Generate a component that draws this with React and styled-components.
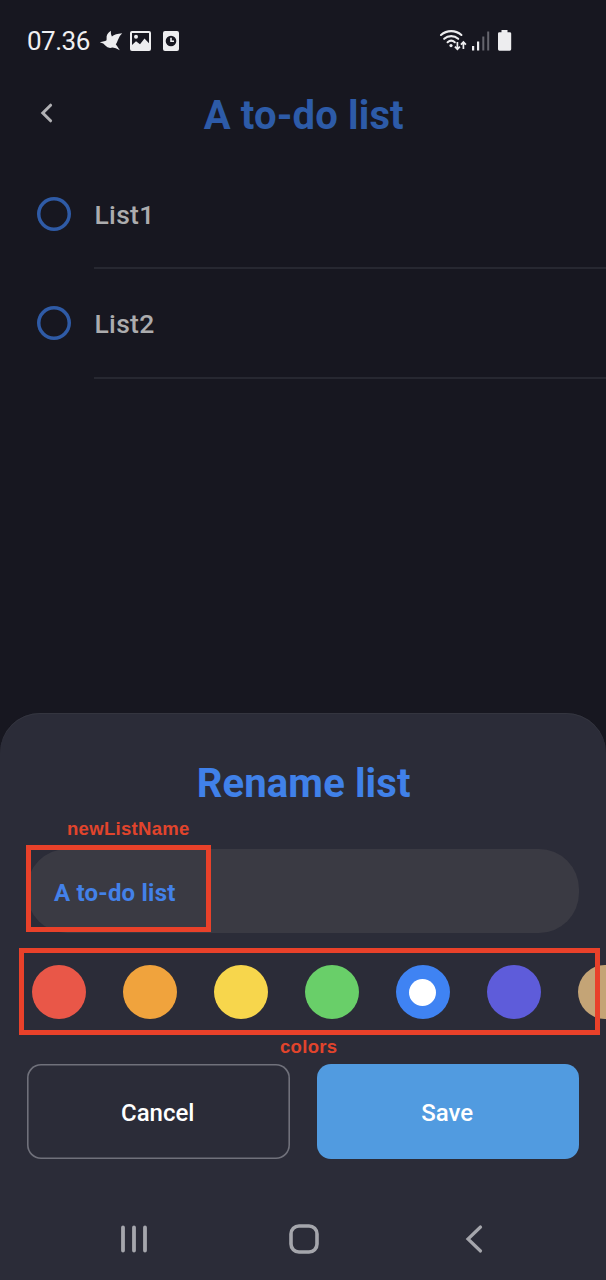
import React from "react";
import styled, { createGlobalStyle } from "styled-components";

const GlobalStyle = createGlobalStyle`
  * { box-sizing: border-box; }
  body { margin: 0; background: #171720; font-family: Roboto, sans-serif; }
`;

const Screen = styled.div`
  position: relative;
  display: flex;
  flex-direction: column;
  width: 606px;
  height: 1280px;
  overflow: hidden;
  background: #171720;
`;

const StatusBar = styled.div`
  display: flex;
  justify-content: space-between;
  align-items: center;
  height: 80px;
  padding: 2px 94px 0 27px;
`;

const StatusGroup = styled.div`
  display: flex;
  align-items: center;
`;

const Clock = styled.span`
  width: 72px;
  font-size: 26px;
  line-height: 30px;
  letter-spacing: -0.5px;
  color: #efeff1;
  white-space: nowrap;
`;

const Header = styled.header`
  display: grid;
  grid-template-columns: 94px 1fr 94px;
  align-items: center;
  height: 72px;
`;

const BackButton = styled.button`
  display: flex;
  padding: 0 0 6px 39px;
  border: 0;
  background: none;
`;

const Title = styled.h1`
  margin: 0;
  padding-left: 1.5px;
  font-size: 40px;
  line-height: 48px;
  font-weight: 700;
  letter-spacing: 0.12px;
  text-align: center;
  white-space: nowrap;
  color: ${(p) => p.$color};
`;

const TaskList = styled.ul`
  margin: 0;
  padding: 7.9px 0 0 37px;
  list-style: none;
`;

const TaskRow = styled.li`
  display: flex;
  align-items: stretch;
  height: 109.5px;
`;

const TaskCheck = styled.span`
  flex: none;
  width: 34px;
  height: 34px;
  margin: 37px 23px 0 0;
  border-radius: 50%;
  box-shadow: inset 0 0 0 3.5px #2f5ba6;
`;

const TaskLabel = styled.span`
  flex: 1;
  padding: 40px 0 0 0.5px;
  border-bottom: 2px solid #272831;
  font-size: 26.5px;
  line-height: 30px;
  font-weight: 500;
  letter-spacing: 0.3px;
  color: #acacae;
`;

const Sheet = styled.section`
  display: flex;
  flex-direction: column;
  height: 567px;
  margin-top: auto;
  padding: 47px 27px 0;
  border-radius: 40px 40px 0 0;
  background: #2b2c38;
  box-shadow: inset 0 1px 0 #34353f;
`;

const NameField = styled.div`
  display: flex;
  align-items: center;
  height: 84px;
  margin-top: 41px;
  padding: 3px 27px 0;
  border-radius: 40px;
  background: #3a3a43;
  font-size: 24px;
  font-weight: 700;
  letter-spacing: 0.2px;
  color: #4381e9;
`;

const Swatches = styled.div`
  display: flex;
  gap: 37px;
  margin: 32px -27px 0 5px;
  overflow: hidden;
`;

const Swatch = styled.span`
  display: flex;
  flex: none;
  align-items: center;
  justify-content: center;
  width: 54px;
  height: 54px;
  border-radius: 50%;
  background: ${(p) => p.$color};
`;

const SelectedDot = styled.span`
  width: 27px;
  height: 27px;
  margin-right: 1px;
  border-radius: 50%;
  background: #ffffff;
`;

const Actions = styled.div`
  display: grid;
  grid-template-columns: 1fr 1fr;
  gap: 27px;
  margin-top: 45px;
`;

const ActionButton = styled.button`
  height: 95px;
  padding: 2px 1px 0 0;
  border: 0;
  border-radius: 14px;
  background: ${(p) => (p.$primary ? "#519be0" : "transparent")};
  box-shadow: ${(p) => (p.$primary ? "none" : "inset 0 0 0 1.6px #70717b")};
  font-family: inherit;
  font-size: 24px;
  font-weight: 500;
  color: #ffffff;
`;

const NavBar = styled.nav`
  display: grid;
  grid-template-columns: repeat(3, 170px);
  justify-items: center;
  align-items: center;
  height: 82px;
  margin: auto 0 0 21.5px;
`;

const NoteBox = styled.div`
  position: absolute;
  left: ${(p) => p.$x}px;
  top: ${(p) => p.$y}px;
  width: ${(p) => p.$w}px;
  height: ${(p) => p.$h}px;
  border: 5px solid #e9412a;
`;

const NoteText = styled.span`
  position: absolute;
  left: ${(p) => p.$x}px;
  top: ${(p) => p.$y}px;
  font-family: "Liberation Sans", sans-serif;
  font-size: 18.5px;
  line-height: 22px;
  font-weight: 700;
  letter-spacing: 0.3px;
  color: #e1442c;
`;

const swatchColors = ["#e95748", "#f0a33d", "#f7d64c", "#69cf69", "#3f83f3", "#5e5cda", "#c4a476"];

function NotificationIcons() {
  return (
    <svg width="82" height="24" viewBox="99 29 82 24" fill="#ededef">
      <path d="M99.8 42.2L105.2 41Q107.2 40.6 106.6 38.2Q106 34 110.8 30.7Q110.6 34 111.9 36.4Q115 33.8 122.2 33.2Q119 36 117.8 40.2Q116.8 43 115.8 44.3Q117 45.8 119.8 50.3Q115.5 47.9 112.6 47.6Q107.8 48.8 105.6 45.8Q103.8 42.9 99.8 42.2Z" />
      <path fillRule="evenodd" d="M132 31H149Q151 31 151 33V49Q151 51 149 51H132Q130 51 130 49V33Q130 31 132 31ZM132 33V45L136 41.2L140 44.2L144.5 38.6L149 43.2V33Z" />
      <circle cx="136" cy="36.8" r="2" />
      <path d="M165 31H177Q179 31 179 33V49Q179 51 177 51H165Q163 51 163 49V33Q163 31 165 31Z" />
      <circle cx="171" cy="41" r="5.3" fill="#171720" />
      <path d="M171 37.8V41.3H174" fill="none" stroke="#ededef" strokeWidth="1.6" />
    </svg>
  );
}

function SignalIcons() {
  return (
    <svg width="73" height="24" viewBox="439 29 73 24" fill="#ededef">
      <g fill="none" stroke="#ededef" strokeWidth="2.1" strokeLinecap="round">
        <path d="M441 35A15.5 15.5 0 0 1 461.4 35" />
        <path d="M444.2 38.8A10.5 10.5 0 0 1 458.2 38.8" />
        <path d="M447.6 42.2A5.6 5.6 0 0 1 454.8 42.2" />
      </g>
      <circle cx="451" cy="45.6" r="1.6" />
      <path d="M457.4 42V49.2M454.9 46.7L457.4 49.3L459.9 46.7M463.4 49V42.5M460.9 44.7L463.4 42.1L465.9 44.7" fill="none" stroke="#ededef" strokeWidth="1.7" />
      <path d="M472 46H474.2V50.5H472ZM477 41.5H479.2V50.5H477Z" />
      <path d="M482.3 36.5H484.3V50.5H482.3ZM487.2 31.5H489.2V50.5H487.2Z" fill="#65656d" />
      <path d="M501.5 30H507.5V32.2H509.8Q511.2 32.2 511.2 33.6V49.3Q511.2 50.7 509.8 50.7H499.4Q498 50.7 498 49.3V33.6Q498 32.2 499.4 32.2H501.5Z" />
    </svg>
  );
}

export default function App() {
  return (
    <Screen>
      <GlobalStyle />
      <StatusBar>
        <StatusGroup>
          <Clock>07.36</Clock>
          <NotificationIcons />
        </StatusGroup>
        <SignalIcons />
      </StatusBar>
      <Header>
        <BackButton aria-label="Back">
          <svg width="14" height="22" viewBox="0 0 14 22" fill="none" stroke="#b1b1b4" strokeWidth="3">
            <path d="M11.6 3.2L3.8 11L11.6 18.8" strokeLinecap="round" />
          </svg>
        </BackButton>
        <Title $color="#2d5ba8">A to-do list</Title>
      </Header>
      <TaskList>
        {["List1", "List2"].map((name) => (
          <TaskRow key={name}>
            <TaskCheck />
            <TaskLabel>{name}</TaskLabel>
          </TaskRow>
        ))}
      </TaskList>
      <Sheet>
        <Title as="h2" $color="#4081e9">Rename list</Title>
        <NameField>A to-do list</NameField>
        <Swatches>
          {swatchColors.map((color, index) => (
            <Swatch key={color} $color={color}>
              {index === 4 && <SelectedDot />}
            </Swatch>
          ))}
        </Swatches>
        <Actions>
          <ActionButton>Cancel</ActionButton>
          <ActionButton $primary>Save</ActionButton>
        </Actions>
        <NavBar>
          <svg width="28" height="30" viewBox="0 0 28 30" fill="none" stroke="#a5a6ac" strokeWidth="3.8" strokeLinecap="round">
            <path d="M3 3.5V26.5M14 3.5V26.5M25 3.5V26.5" />
          </svg>
          <svg width="30" height="30" viewBox="0 0 30 30" fill="none" stroke="#a5a6ac" strokeWidth="3.6">
            <rect x="2" y="2" width="26" height="26" rx="8" />
          </svg>
          <svg width="18" height="30" viewBox="0 0 18 30" fill="none" stroke="#a5a6ac" strokeWidth="3.2" strokeLinecap="round">
            <path d="M15.5 3L3 15L15.5 27" />
          </svg>
        </NavBar>
      </Sheet>
      <NoteText $x={67} $y={818}>newListName</NoteText>
      <NoteBox $x={26} $y={845} $w={185} $h={87} />
      <NoteBox $x={19} $y={948} $w={581} $h={87} />
      <NoteText $x={280} $y={1036}>colors</NoteText>
    </Screen>
  );
}
